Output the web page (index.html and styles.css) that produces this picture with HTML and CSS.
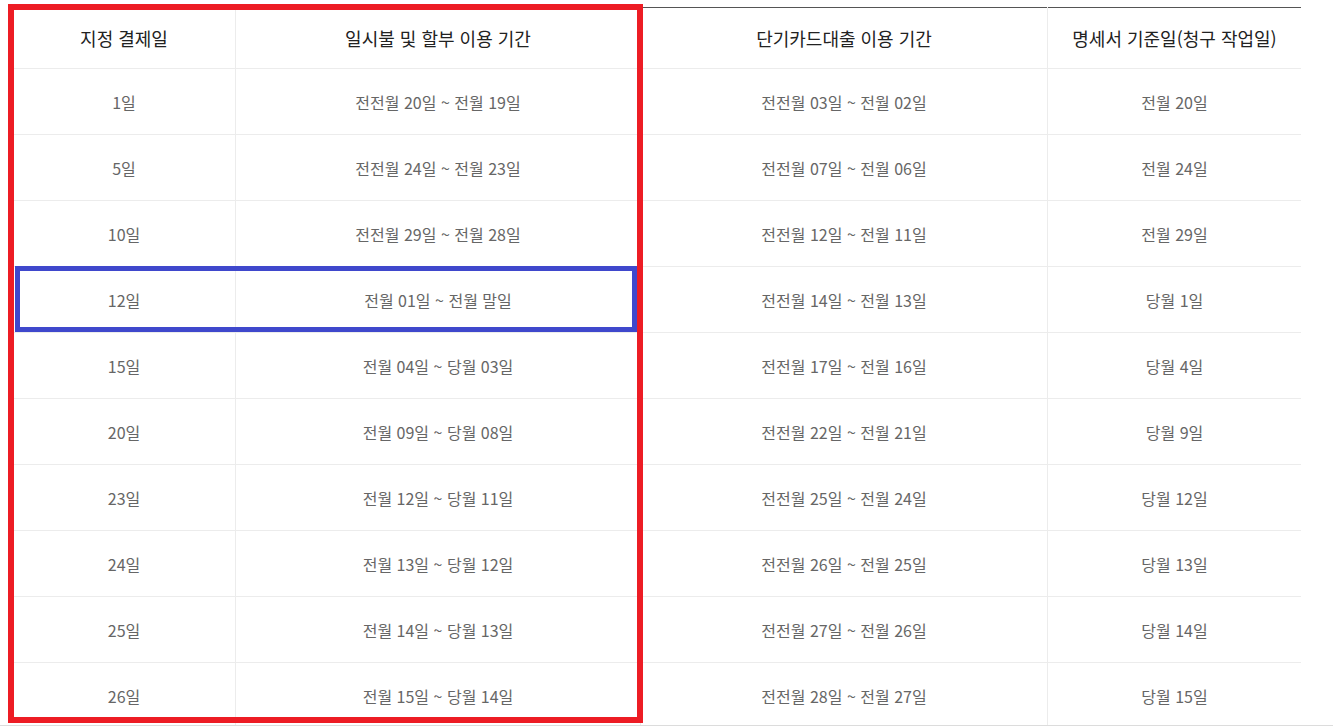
FILE: index.html
```html
<!DOCTYPE html>
<html lang="ko">
<head>
<meta charset="utf-8">
<link rel="stylesheet" href="styles.css">
</head>
<body>
<div class="wrap">
  <table class="schedule">
    <thead>
      <tr>
        <th class="c1">지정 결제일</th>
        <th class="c2">일시불 및 할부 이용 기간</th>
        <th class="c3">단기카드대출 이용 기간</th>
        <th class="c4">명세서 기준일(청구 작업일)</th>
      </tr>
    </thead>
    <tbody>
      <tr><td>1일</td><td>전전월 20일 ~ 전월 19일</td><td>전전월 03일 ~ 전월 02일</td><td>전월 20일</td></tr>
      <tr><td>5일</td><td>전전월 24일 ~ 전월 23일</td><td>전전월 07일 ~ 전월 06일</td><td>전월 24일</td></tr>
      <tr><td>10일</td><td>전전월 29일 ~ 전월 28일</td><td>전전월 12일 ~ 전월 11일</td><td>전월 29일</td></tr>
      <tr><td>12일</td><td>전월 01일 ~ 전월 말일</td><td>전전월 14일 ~ 전월 13일</td><td>당월 1일</td></tr>
      <tr><td>15일</td><td>전월 04일 ~ 당월 03일</td><td>전전월 17일 ~ 전월 16일</td><td>당월 4일</td></tr>
      <tr><td>20일</td><td>전월 09일 ~ 당월 08일</td><td>전전월 22일 ~ 전월 21일</td><td>당월 9일</td></tr>
      <tr><td>23일</td><td>전월 12일 ~ 당월 11일</td><td>전전월 25일 ~ 전월 24일</td><td>당월 12일</td></tr>
      <tr><td>24일</td><td>전월 13일 ~ 당월 12일</td><td>전전월 26일 ~ 전월 25일</td><td>당월 13일</td></tr>
      <tr><td>25일</td><td>전월 14일 ~ 당월 13일</td><td>전전월 27일 ~ 전월 26일</td><td>당월 14일</td></tr>
      <tr><td>26일</td><td>전월 15일 ~ 당월 14일</td><td>전전월 28일 ~ 전월 27일</td><td>당월 15일</td></tr>
    </tbody>
  </table>
  <div class="mark mark-red"></div>
  <div class="mark mark-blue"></div>
</div>
</body>
</html>
```

FILE: styles.css
```css
html, body {
  margin: 0;
  padding: 0;
  background: #ffffff;
}

body {
  font-family: "Noto Sans CJK KR", "Noto Sans", sans-serif;
  overflow: hidden;
}

.wrap {
  position: relative;
  padding: 7px 0 0 13px;
  height: 718px;
  overflow: hidden;
  border-bottom: 1px solid #dcdcdc;
}

.schedule {
  border-collapse: collapse;
  table-layout: fixed;
  width: 1285px;
  border-top: 1px solid #555555;
}

.schedule th,
.schedule td {
  text-align: center;
  border-left: 1px solid #ececec;
  border-bottom: 1px solid #ececec;
  padding: 0;
}

.schedule th:first-child,
.schedule td:first-child {
  border-left: 0;
}

.schedule th {
  height: 60px;
  font-size: 18px;
  font-weight: 400;
  color: #222222;
}

.schedule td {
  height: 65px;
  font-size: 16px;
  color: #666666;
}

.c1 { width: 222px; }
.c2 { width: 404px; }
.c3 { width: 406px; }
.c4 { width: 253px; }

.mark {
  position: absolute;
  box-sizing: border-box;
}

.mark-red {
  left: 8px;
  top: 4px;
  width: 635px;
  height: 719px;
  border: 6px solid #ed1c24;
}

.mark-blue {
  left: 15px;
  top: 266px;
  width: 622px;
  height: 66px;
  border: 5px solid #3f48cc;
}
```
